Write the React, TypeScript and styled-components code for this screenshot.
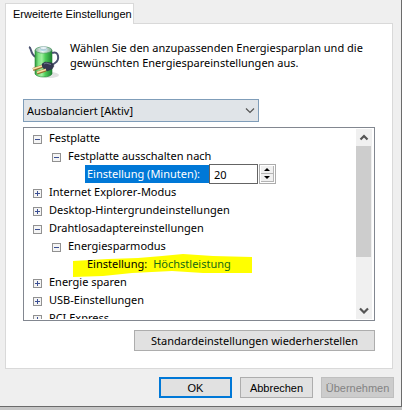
import React, { useState } from "react";
import styled, { createGlobalStyle, css } from "styled-components";

const GlobalStyle = createGlobalStyle`
  *, *::before, *::after { box-sizing: border-box; }
  html, body { margin: 0; min-height: 100%; background: #c6c6c6; }
  body, button, input, select { font-family: "Noto Sans", "Open Sans", sans-serif; font-size: 11px; color: #000; }
`;

const Dialog = styled.main`
  background: #efefef;
  border-right: 1px solid #6b6b6b;
  border-bottom: 1px solid #6b6b6b;
  box-shadow: 0 1px 4px #777;
  padding: 3px 8px 8px 5px;
`;

const TabList = styled.div`
  display: flex;
`;

const Tab = styled.button`
  height: 21px;
  margin-bottom: -1px;
  padding: 0 7px;
  width: 129px;
  white-space: nowrap;
  position: relative;
  background: #fff;
  border: 1px solid #d9d9d9;
  border-bottom: 0;
  font-family: "Liberation Sans", Arial, sans-serif;
  font-size: 11px;
  text-align: left;
`;

const Panel = styled.section`
  background: #fff;
  border: 1px solid #d9d9d9;
  padding: 16px 17px 17px;
`;

const Intro = styled.header`
  display: flex;
  gap: 8px;
  height: 59px;
  padding-left: 5px;
  > svg { flex: none; margin-top: 4px; }
`;

const IntroText = styled.p`
  margin: 0;
  line-height: 15px;
  white-space: nowrap;
`;

const PlanField = styled.div`
  position: relative;
  width: 236px;
  margin-bottom: 5px;
  svg { position: absolute; right: 4px; top: 8px; pointer-events: none; }
`;

const PlanSelect = styled.select`
  display: block;
  appearance: none;
  width: 100%;
  height: 23px;
  padding: 0 3px;
  border: 1px solid #7f9db9;
  border-radius: 0;
  background: #e0e4e8;
`;

const TreeFrame = styled.div`
  display: flex;
  justify-content: space-between;
  height: 194px;
  padding: 1px;
  border: 1px solid #828790;
  overflow: hidden;
`;

const Tree = styled.ul`
  flex: 1;
  min-width: 0;
  margin: 0;
  padding: 0 0 0 8px;
  list-style: none;
  overflow: hidden;
`;

const Group = styled.ul`
  margin: 0;
  padding: 0 0 0 19px;
  list-style: none;
`;

const Row = styled.div`
  display: flex;
  align-items: center;
  height: 18px;
  white-space: nowrap;
`;

const BranchRow = styled(Row)`
  padding-bottom: 2px;
`;

const Expander = styled.button`
  display: flex;
  padding: 0;
  border: 0;
  background: none;
  margin: 4px 7px 0 0;
`;

const Setting = styled.label<{ $selected?: boolean }>`
  height: 18px;
  line-height: 18px;
  margin-left: 14px;
  padding: 0 2px;
  ${(p) => p.$selected && css`
    width: 124px;
    background: #0078d7;
    color: #fff;
  `}
`;

const Minutes = styled.input`
  width: 49px;
  height: 20px;
  padding: 0 4px;
  border: 1px solid #646464;
  border-radius: 0;
`;

const Spinner = styled.div`
  display: flex;
  flex-direction: column;
  width: 17px;
  height: 20px;
  margin-left: 1px;
  padding: 1px;
  border: 1px solid #acacac;
`;

const SpinButton = styled.button`
  display: flex;
  flex: 1;
  align-items: center;
  justify-content: center;
  padding: 0;
  border: 0 solid #b4b4b4;
  border-right-width: 1px;
  border-bottom-width: 1px;
  background: #f0f0f0;
`;

const Marked = styled.div`
  position: relative;
  isolation: isolate;
  display: flex;
  svg { position: absolute; left: 0; top: -1px; z-index: -1; }
`;

const Value = styled.span`
  margin-left: 4px;
  line-height: 18px;
  color: #146a14;
`;

const ScrollBar = styled.div`
  display: flex;
  flex-direction: column;
  width: 16px;
  margin-right: 1px;
  background: #f0f0f0;
`;

const ScrollButton = styled.button`
  display: flex;
  align-items: center;
  justify-content: center;
  height: 17px;
  padding: 0;
  border: 0;
  background: #f0f0f0;
`;

const Thumb = styled.div`
  height: 111px;
  margin-right: 1px;
  margin-bottom: auto;
  background: #cdcdcd;
`;

const PushButton = styled.button<{ $primary?: boolean; $wide?: boolean }>`
  width: ${(p) => (p.$wide ? 241 : 73)}px;
  height: 21px;
  padding: 0;
  background: #e1e1e1;
  border: ${(p) => (p.$primary ? "2px solid #0078d7" : "1px solid #adadad")};
  font-family: ${(p) => (p.$wide ? '"Noto Sans", sans-serif' : '"Liberation Sans", Arial, sans-serif')};
  &:disabled { background: #ccc; border-color: #bfbfbf; color: #838383; }
`;

const Actions = styled.div<{ $footer?: boolean }>`
  display: flex;
  justify-content: flex-end;
  gap: 8px;
  padding-top: ${(p) => (p.$footer ? 8 : 9)}px;
  margin-right: ${(p) => (p.$footer ? -1 : 0)}px;
`;

function BatteryIcon() {
  return (
    <svg width="34" height="36" viewBox="0 0 34 36" aria-hidden="true">
      <defs>
        <linearGradient id="cell" x2="1">
          <stop stopColor="#2f9a3c" /><stop offset=".2" stopColor="#7fe283" />
          <stop offset=".4" stopColor="#a0f0a0" /><stop offset=".6" stopColor="#4fce5b" />
          <stop offset="1" stopColor="#1c8230" />
        </linearGradient>
        <linearGradient id="cap" x2="1">
          <stop stopColor="#8fb3a0" /><stop offset=".45" stopColor="#f4fafa" /><stop offset="1" stopColor="#7da692" />
        </linearGradient>
      </defs>
      <ellipse cx="22" cy="31" rx="9" ry="3" fill="#e2e2e2" />
      <path d="M1 3C4 4 2 11 8 13" fill="none" stroke="#4a5170" strokeWidth="2" />
      <path d="M7 6v24c2 4 15 4 17 0V6z" fill="url(#cell)" stroke="#258337" strokeWidth=".6" />
      <ellipse cx="15.500" cy="6" rx="8.300" ry="3.200" fill="url(#cap)" stroke="#4c9a62" strokeWidth=".7" />
      <path d="M12 4v2c1 1.500 6 1.500 7 0V4z" fill="#b5dbe7" />
      <ellipse cx="15.500" cy="4" rx="3.500" ry="1.400" fill="#edf7fa" stroke="#91a9b0" strokeWidth=".5" />
      <path d="M24 9c7-3 8 7 3 10l-3 2" fill="none" stroke="#4a5170" strokeWidth="2" />
      <path d="M14 20l3-2 7 1 2 3-2 3-5 2-5-4z" fill="#343850" stroke="#252940" strokeWidth=".5" />
      <path d="M16 20l2-1 5 1.500" fill="none" stroke="#747992" />
      <path d="M14 22.500l-9 3M18 26l-9 3" stroke="#99702e" strokeWidth="3" />
      <path d="M14 22l-9 3M18 25.500l-9 3" stroke="#fae0a8" strokeWidth="1.600" />
    </svg>
  );
}

function Chevron({ up = false, thin = false }: { up?: boolean; thin?: boolean }) {
  return (
    <svg width="10" height="7" viewBox="0 0 10 7" aria-hidden="true">
      <path d={up ? "M1.500 5.500L5 2l3.500 3.500" : "M1 1.500l4 4 4-4"} fill="none" stroke="#555" strokeWidth={thin ? 1.2 : 2.2} />
    </svg>
  );
}

function SpinArrow({ up = false }: { up?: boolean }) {
  return (
    <svg width="6" height="3" viewBox="0 0 6 3" aria-hidden="true">
      <path d={up ? "M0 3L3 0 6 3z" : "M0 0l3 3L6 0z"} />
    </svg>
  );
}

function Toggle({ open, label }: { open?: boolean; label: string }) {
  return (
    <Expander aria-expanded={!!open} aria-label={label}>
      <svg width="9" height="9" viewBox="0 0 9 9" aria-hidden="true">
        <rect x=".5" y=".5" width="8" height="8" fill="#f4f4f4" stroke="#919191" />
        <path d={open ? "M2 4.500h5" : "M2 4.500h5M4.500 2v5"} stroke="#3b4f93" />
      </svg>
    </Expander>
  );
}

function Branch({ label, open, children }: { label: string; open?: boolean; children?: React.ReactNode }) {
  return (
    <li>
      <BranchRow><Toggle open={open} label={label} />{label}</BranchRow>
      {children && <Group>{children}</Group>}
    </li>
  );
}

export default function App() {
  const [minutes, setMinutes] = useState(20);
  return (
    <>
      <GlobalStyle />
      <Dialog>
        <TabList role="tablist"><Tab role="tab" aria-selected="true">Erweiterte Einstellungen</Tab></TabList>
        <Panel role="tabpanel">
          <Intro>
            <BatteryIcon />
            <IntroText>
              Wählen Sie den anzupassenden Energiesparplan und die<br />gewünschten Energiespareinstellungen aus.
            </IntroText>
          </Intro>
          <PlanField>
            <PlanSelect aria-label="Energiesparplan"><option>Ausbalanciert [Aktiv]</option></PlanSelect>
            <Chevron thin />
          </PlanField>
          <TreeFrame>
            <Tree>
              <Branch label="Festplatte" open>
                <Branch label="Festplatte ausschalten nach" open>
                  <li>
                    <Row>
                      <Setting $selected htmlFor="minutes">Einstellung (Minuten):</Setting>
                      <Minutes id="minutes" value={minutes} onChange={(e) => setMinutes(Number(e.target.value) || 0)} />
                      <Spinner>
                        <SpinButton aria-label="Mehr" onClick={() => setMinutes(minutes + 1)}><SpinArrow up /></SpinButton>
                        <SpinButton aria-label="Weniger" onClick={() => setMinutes(Math.max(0, minutes - 1))}><SpinArrow /></SpinButton>
                      </Spinner>
                    </Row>
                  </li>
                </Branch>
              </Branch>
              <Branch label="Internet Explorer-Modus" />
              <Branch label="Desktop-Hintergrundeinstellungen" />
              <Branch label="Drahtlosadaptereinstellungen" open>
                <Branch label="Energiesparmodus" open>
                  <li>
                    <Marked>
                      <svg width="181" height="26" viewBox="0 0 181 26" aria-hidden="true">
                        <path d="M2 7L37 5 67 4 91 2 112 0 142 2 181 3V19L132 19 101 17 61 19 32 22 2 23z" fill="#ff0" />
                      </svg>
                      <Setting as="span">Einstellung:</Setting><Value>Höchstleistung</Value>
                    </Marked>
                  </li>
                </Branch>
              </Branch>
              <Branch label="Energie sparen" />
              <Branch label="USB-Einstellungen" />
              <Branch label="PCI Express" />
            </Tree>
            <ScrollBar>
              <ScrollButton aria-label="Nach oben"><Chevron up /></ScrollButton>
              <Thumb />
              <ScrollButton aria-label="Nach unten"><Chevron /></ScrollButton>
            </ScrollBar>
          </TreeFrame>
          <Actions><PushButton $wide>Standardeinstellungen wiederherstellen</PushButton></Actions>
        </Panel>
        <Actions $footer>
          <PushButton $primary>OK</PushButton>
          <PushButton>Abbrechen</PushButton>
          <PushButton disabled>Übernehmen</PushButton>
        </Actions>
      </Dialog>
    </>
  );
}
